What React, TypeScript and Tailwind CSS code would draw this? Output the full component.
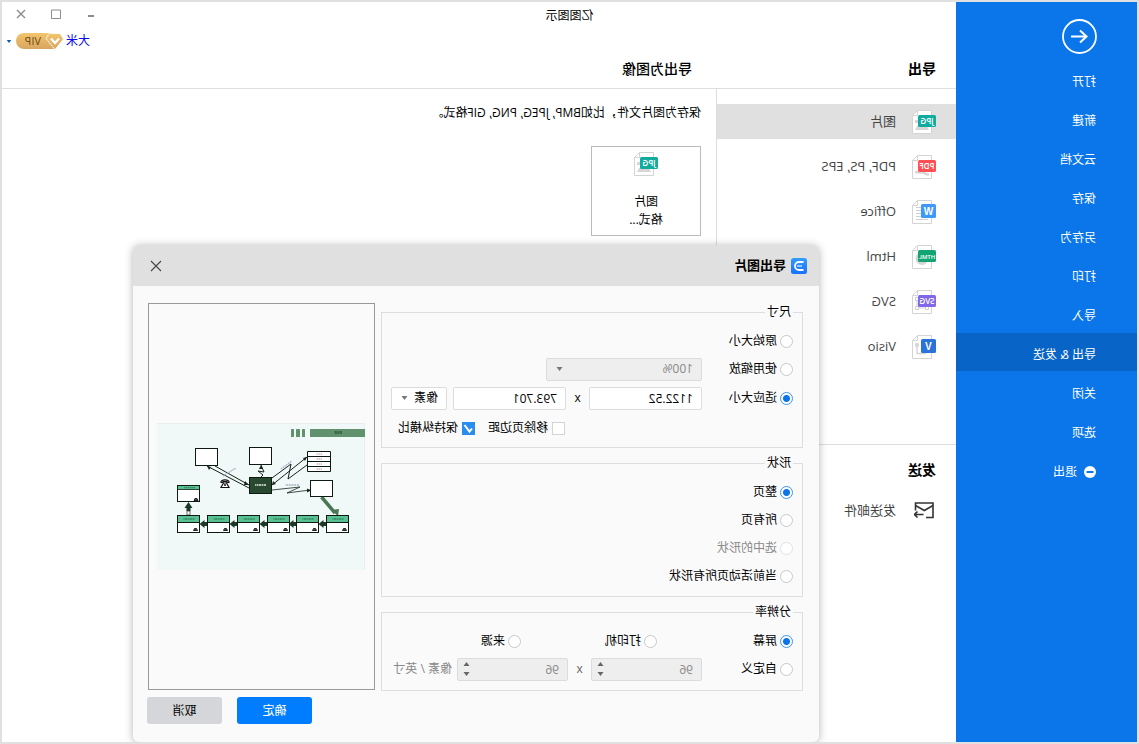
import type { ReactNode } from "react";
import clsx from "clsx";

const menu = ["打开", "新建", "云文档", "保存", "另存为", "打印", "导入", "导出 & 发送", "关闭", "选项"];

type FileType = "JPG" | "PDF" | "W" | "HTML" | "SVG" | "V";

const formats: { type: FileType; label: string }[] = [
  { type: "JPG", label: "图片" },
  { type: "PDF", label: "PDF, PS, EPS" },
  { type: "W", label: "Office" },
  { type: "HTML", label: "Html" },
  { type: "SVG", label: "SVG" },
  { type: "V", label: "Visio" },
];

const badgeColors: Record<FileType, string> = {
  JPG: "#12ab9f",
  PDF: "#ff5055",
  W: "#3f98fb",
  HTML: "#12a572",
  SVG: "#8168e8",
  V: "#2b73d8",
};

function FileArt({ type }: { type: FileType }) {
  switch (type) {
    case "JPG":
      return <path d="M7 20l2-4h10l2 4zM18 10h3v3h-3z" fill="#d6d6d6" />;
    case "PDF":
      return <path d="M7 19.500c3 .500 4-2 7-2s4 .500 7-1" stroke="#d6d6d6" strokeWidth="2.500" fill="none" />;
    case "W":
      return <path d="M8 7.500h12M8 10.500h12M8 13.500h12M8 16.500h12M8 19.500h12" stroke="#d0d0d0" fill="none" />;
    case "HTML":
      return <circle cx="14" cy="13.500" r="6.500" fill="#d6d6d6" />;
    case "SVG":
      return (
        <path d="M7.500 16.500h3v3h-3zM17.500 16.500h3v3h-3zM17.500 7.500h3v3h-3zM10.500 18h7M19 10.500v6" stroke="#d0d0d0" fill="none" />
      );
    default:
      return (
        <g>
          <circle cx="19" cy="10" r="2.200" fill="#d6d6d6" />
          <path d="M19 10v8.500h-9" stroke="#d6d6d6" strokeWidth="1.500" fill="none" />
        </g>
      );
  }
}

function FileIcon({ type }: { type: FileType }) {
  const short = type.length === 1;
  return (
    <svg viewBox="0 0 24 24" className="size-6 shrink-0" aria-hidden="true">
      <path d="M4.500.5h14l5 5v18h-19z" fill="#fff" stroke="#d4d4d4" />
      <path d="M18.500.5v5h5" fill="none" stroke="#d4d4d4" />
      <FileArt type={type} />
      <rect x="0" y={short ? 4 : 5} width={short ? 15 : 18} height={short ? 14 : 12} rx="1.500" fill={badgeColors[type]} />
      <text
        x={short ? 7.5 : 9}
        y={short ? 14.5 : 14}
        textAnchor="middle"
        fill="#fff"
        fontSize={short ? 10 : type === "HTML" ? 6 : 8}
        fontWeight={short ? 700 : 600}
        fontFamily={short ? "Liberation Sans, sans-serif" : "Open Sans, sans-serif"}
      >
        {type}
      </text>
    </svg>
  );
}

function Radio({
  name,
  label,
  checked,
  disabled,
  className,
}: {
  name: string;
  label: string;
  checked?: boolean;
  disabled?: boolean;
  className?: string;
}) {
  return (
    <label className={clsx("flex shrink-0 items-center gap-[3px] whitespace-nowrap", disabled && "text-[#888]", className)}>
      <input
        type="radio"
        name={name}
        defaultChecked={checked}
        disabled={disabled}
        className="size-[13px] appearance-none rounded-full border border-[#c8c8c8] bg-white checked:border-[#3f93f0] checked:bg-[radial-gradient(circle,#0a74e8_0_3px,#fff_4px)] disabled:border-[#e2e2e2]"
      />
      {label}
    </label>
  );
}

function Checkbox({ label, checked }: { label: string; checked?: boolean }) {
  return (
    <label className="flex items-center gap-1 whitespace-nowrap">
      <span className="relative flex size-[13px]">
        <input
          type="checkbox"
          defaultChecked={checked}
          className="peer size-[13px] appearance-none border border-[#d4d4d4] bg-white checked:border-[#2b8cf0] checked:bg-[#2b8cf0]"
        />
        <svg viewBox="0 0 13 13" className="pointer-events-none absolute inset-0 hidden peer-checked:block">
          <path d="M3 6.500l2.500 3.200L10.500 3" fill="none" stroke="#fff" strokeWidth="2" />
        </svg>
      </span>
      {label}
    </label>
  );
}

const fieldBox = "h-[23px] w-full appearance-none rounded-[2px] border border-[#dcdcdc] bg-white px-2 disabled:bg-[#eee] disabled:text-[#888] disabled:opacity-100";

function Dropdown({ label, value, disabled, className }: { label: string; value: string; disabled?: boolean; className: string }) {
  return (
    <div className={clsx("relative", className)}>
      <select aria-label={label} disabled={disabled} className={fieldBox}>
        <option>{value}</option>
      </select>
      <svg viewBox="0 0 6 4" className="pointer-events-none absolute top-[9px] right-[10px] h-1 w-[7px]">
        <path d="M0 0h6L3 4z" fill="#777" />
      </svg>
    </div>
  );
}

function Spinner({ label }: { label: string }) {
  return (
    <div className="relative w-[111px]">
      <input aria-label={label} defaultValue="96" disabled className={fieldBox} />
      <div className="absolute inset-y-0 right-[6px] flex flex-col justify-center gap-[6px]">
        <button type="button" aria-label="增加" disabled>
          <svg viewBox="0 0 6 4" className="h-1 w-[7px]">
            <path d="M0 4h6L3 0z" fill="#666" />
          </svg>
        </button>
        <button type="button" aria-label="减少" disabled>
          <svg viewBox="0 0 6 4" className="h-1 w-[7px]">
            <path d="M0 0h6L3 4z" fill="#666" />
          </svg>
        </button>
      </div>
    </div>
  );
}

function Group({ title, className, children }: { title: string; className?: string; children: ReactNode }) {
  return (
    <fieldset className={clsx("border border-[#dedede] px-[9px] pt-[6px]", className)}>
      <legend className="px-[2px] leading-[18px]">{title}</legend>
      {children}
    </fieldset>
  );
}

// bottom row of the diagram
const steps = [16.5, 46.5, 75.5, 105.5, 135.5, 165.5];

function Diagram() {
  return (
    <svg viewBox="0 0 208 147" className="w-[208px]" aria-hidden="true">
      <rect width="208" height="147" fill="#f1f8f8" />
      <path d="M.5 147V.5H208" fill="none" stroke="#e8efee" />
      <g fill="#5f926d">
        <rect y="6" width="55" height="8" />
        <rect x="60" y="6" width="3" height="8" rx=".5" />
        <rect x="65" y="6" width="4" height="8" rx=".5" />
        <rect x="71" y="6" width="3" height="8" rx=".5" />
      </g>
      <path d="M23 9.500h8" stroke="#3c6548" strokeWidth="3" strokeDasharray="2 .6" />

      {/* connectors */}
      <g fill="none" stroke="#15251a">
        <path d="M158 43L116 65M150 43L116 62" />
        <path d="M104 42l-3 7 6-1-5 4 3 3" />
        <path d="M93 55L74 41l3 15-19-14M93 62L58 34" />
        <path d="M93 67l-28-3 13 6-23-3" strokeWidth=".8" />
      </g>
      <path d="M116 62l4-4 1 4zM158 43l-4 1 2 3zM58 34l4 1-2 3zM93 62l-1-4-3 3zM104 42l-2 4h4zM54 67.500l4-2v4z" fill="#15251a" />
      <path d="M43.500 74L30 90" stroke="#4b7654" strokeWidth="3.500" />
      <path d="M26 86l8 1-7 6z" fill="#4b7654" />
      <path d="M142 45l-13-8M84 38l-11-8" transform="translate(0 8)" stroke="#a9b7c8" strokeWidth="1.500" strokeDasharray="1.500 .7" />
      <path d="M66 62h14" stroke="#a3b3c0" strokeWidth="1.500" strokeDasharray="2 .8" />

      <g fill="#fff" stroke="#0c1a10">
        <rect x="147.500" y="25.500" width="22" height="17" />
        <rect x="93.500" y="24.500" width="22" height="17" />
        <rect x="32.500" y="57.500" width="22" height="16" />
        <path d="M34.500 28.500h23v20h-23zM34.500 33.500h23M34.500 38.500h23M34.500 43.500h23" />
        <rect x="93.500" y="54.500" width="22" height="16" fill="#28482f" />
      </g>
      <path d="M99 62h11" stroke="#e0e6e1" strokeWidth="1.500" strokeDasharray="2 .5" />
      <path d="M43 31h6M43 36h6M43 41h6M43 46h6" stroke="#b69ab8" strokeDasharray="1.500 .5" />

      {/* telephone */}
      <path d="M136 59.500c-1-3.500 9-3.500 8 0h-2v-1h-4v1zM138.500 60h3l2.500 4.500h-8z" fill="#fff" stroke="#111" strokeWidth="1.200" />
      <circle cx="140" cy="62" r="1" fill="#111" />

      <rect x="165.500" y="62.500" width="22" height="16" fill="#fff" stroke="#0c1a10" />
      <rect x="166" y="63" width="21" height="3.500" fill="#58c092" />
      <path d="M165.500 66.500h22" stroke="#0c1a10" strokeWidth=".8" />
      <path d="M170 64.700h11" stroke="#2a7d58" strokeDasharray="1.500 .4" />
      <path d="M167 77.500l1-2h2l1 2z" fill="#555" stroke="#222" />
      <path d="M176.500 79l4 6h-2v3h-4v-3h-2z" fill="#1c3a26" />
      <rect x="175" y="88" width="3" height="4" fill="#fff" stroke="#333" strokeWidth=".7" />

      {steps.map((x, i) => (
        <g key={x}>
          <rect x={x} y="92.500" width="22" height="17" fill="#fff" stroke="#0c1a10" />
          <rect x={x + 0.5} y="93" width="21" height="6" fill="#58c092" />
          <path d={`M${x} 99.500h22`} stroke="#0c1a10" />
          <path d={`M${x + 5} 96h11`} stroke="#2f8a62" strokeWidth="1.500" strokeDasharray="2 .5" />
          <path d={`M${x + 2} 107.500l1-2h2l1 2z`} fill="#555" stroke="#222" />
          {i < 5 && <path d={`M${x + 22.5} 99h2.500v-2l5 4-5 4v-2h-2.500z`} fill="#1c3a26" />}
        </g>
      ))}
    </svg>
  );
}

function ExportDialog() {
  return (
    <div
      role="dialog"
      aria-labelledby="export-title"
      className="absolute top-[243px] left-[318px] w-[686px] overflow-hidden rounded-md bg-[#fafafa] text-xs shadow-[0_1px_8px_rgba(0,0,0,0.3)]"
    >
      <div className="flex h-[41px] items-center bg-[#e0e0e0] pr-[17px] pl-3">
        <svg viewBox="0 0 16 16" className="size-4" aria-hidden="true">
          <defs>
            <linearGradient id="logo" x2="0" y2="1">
              <stop offset="0" stopColor="#339dff" />
              <stop offset="1" stopColor="#1870ff" />
            </linearGradient>
          </defs>
          <rect width="16" height="16" rx="2.500" fill="url(#logo)" />
          <path d="M3.500 4H8a4 4 0 0 1 0 8H3.500" fill="none" stroke="#fff" strokeWidth="1.800" />
          <path d="M5 8h5" stroke="#b5d9ff" strokeWidth="1.600" />
        </svg>
        <h2 id="export-title" className="ml-[5px] flex-1 text-[13px] font-bold">
          导出图片
        </h2>
        <button aria-label="关闭">
          <svg viewBox="0 0 12 12" className="size-3">
            <path d="M1 1l10 10M11 1L1 11" stroke="#444" strokeWidth="1.100" />
          </svg>
        </button>
      </div>

      <form className="flex gap-[6px] pt-[17px] pr-[14px] pb-[18px] pl-4">
        <div className="flex flex-1 flex-col gap-[6px] self-start">
          <Group title="尺寸" className="pb-1">
            <div className="flex h-7 items-center">
              <Radio name="size" label="原始大小" />
            </div>
            <div className="flex h-7 items-center">
              <Radio name="size" label="使用缩放" className="w-[91px]" />
              <Dropdown label="缩放" value="100%" disabled className="w-[156px]" />
            </div>
            <div className="flex h-[30px] items-center">
              <Radio name="size" label="适应大小" checked className="w-[91px]" />
              <input aria-label="宽度" defaultValue="1122.52" className={clsx(fieldBox, "flex-1")} />
              <span className="w-[23px] text-center">x</span>
              <input aria-label="高度" defaultValue="793.701" className={clsx(fieldBox, "flex-1")} />
              <Dropdown label="单位" value="像素" className="ml-[6px] w-14 shrink-0" />
            </div>
            <div className="flex h-[30px] items-center gap-[13px] pl-[228px]">
              <Checkbox label="移除页边距" />
              <Checkbox label="保持纵横比" checked />
            </div>
          </Group>

          <Group title="形状" className="pb-[6px]">
            <div className="flex h-7 items-center">
              <Radio name="shape" label="整页" checked />
            </div>
            <div className="flex h-7 items-center">
              <Radio name="shape" label="所有页" />
            </div>
            <div className="flex h-7 items-center">
              <Radio name="shape" label="选中的形状" disabled />
            </div>
            <div className="flex h-7 items-center">
              <Radio name="shape" label="当前活动页所有形状" />
            </div>
          </Group>

          <Group title="分辨率" className="pb-[7px]">
            <div className="flex h-7 items-center">
              <Radio name="dpi" label="屏幕" checked className="w-[136px]" />
              <Radio name="dpi" label="打印机" className="w-[136px]" />
              <Radio name="dpi" label="来源" />
            </div>
            <div className="flex h-7 items-center">
              <Radio name="dpi" label="自定义" className="w-[91px]" />
              <Spinner label="水平分辨率" />
              <span className="w-[23px] text-center text-[#666]">x</span>
              <Spinner label="垂直分辨率" />
              <span className="ml-[5px] whitespace-nowrap text-[#888]">像素 / 英寸</span>
            </div>
          </Group>
        </div>

        <div className="flex w-[228px] flex-col">
          <div className="mr-px flex min-h-[387px] items-center justify-center border border-[#999]">
            <Diagram />
          </div>
          <div className="mt-[7px] flex justify-end gap-[15px]">
            <button type="button" className="h-[27px] w-[75px] rounded-[3px] bg-[#007dff] text-white">
              确定
            </button>
            <button type="button" className="h-[27px] w-[75px] rounded-[3px] bg-[#d5d6da]">
              取消
            </button>
          </div>
        </div>
      </form>
    </div>
  );
}

export default function App() {
  return (
    <div className="relative flex min-h-screen -scale-x-100 overflow-hidden border-2 border-[#e0e0e0] bg-white font-['Open_Sans','Noto_Sans_CJK_SC',sans-serif] text-xs text-black [font-kerning:none]">
      <nav className="w-[181px] shrink-0 bg-[#0a76ea] pt-[17px] text-white">
        <button aria-label="返回" className="ml-10 block">
          <svg viewBox="0 0 35 35" className="size-[35px]">
            <circle cx="17.500" cy="17.500" r="16.500" fill="none" stroke="#fff" strokeWidth="1.800" />
            <path d="M26 17.500H11M17 11.500l-6.500 6 6.500 6" fill="none" stroke="#fff" strokeWidth="2" />
          </svg>
        </button>
        <ul className="mt-[6px] flex flex-col gap-px">
          {menu.map((item) => (
            <li key={item}>
              <a href="#" className={clsx("flex h-[38px] items-center pt-[6px] pl-[41px]", item.includes("&") && "bg-[#0865c7]")}>
                {item}
              </a>
            </li>
          ))}
          <li>
            <a href="#" className="flex h-[38px] items-center gap-[7px] pt-[6px] pl-[41px]">
              <svg viewBox="0 0 12 12" className="size-3" aria-hidden="true">
                <circle cx="6" cy="6" r="6" fill="#fff" />
                <path d="M2.500 6h7" stroke="#0a76ea" strokeWidth="2" />
              </svg>
              退出
            </a>
          </li>
        </ul>
      </nav>

      <div className="flex flex-1 flex-col">
        <header className="h-[87px] border-b border-[#dedede]">
          <div className="flex h-[27px] items-center">
            <h1 className="flex-1 text-center">亿图图示</h1>
            <div className="flex w-[181px] justify-end gap-[25px] pr-[14px] pb-1">
              <button aria-label="最小化">
                <svg viewBox="0 0 10 10" className="size-[10px]">
                  <path d="M2 7h6" stroke="#8c8c8c" strokeWidth="2" />
                </svg>
              </button>
              <button aria-label="最大化">
                <svg viewBox="0 0 10 10" className="size-[10px]">
                  <path d="M.5 1h9v8.500h-9z" fill="none" stroke="#8c8c8c" />
                </svg>
              </button>
              <button aria-label="关闭窗口">
                <svg viewBox="0 0 10 10" className="size-[10px]">
                  <path d="M1 1l8 8M9 1L1 9" stroke="#8c8c8c" strokeWidth="1.400" />
                </svg>
              </button>
            </div>
          </div>
          <div className="flex h-6 items-center justify-end gap-[2px] pr-1">
            <a href="#" className="text-[#0a0af0]">
              大米
            </a>
            <svg viewBox="0 0 48 16" className="h-4 w-12" aria-label="VIP">
              <defs>
                <linearGradient id="gold" x2="0" y2="1">
                  <stop offset="0" stopColor="#f3c56b" />
                  <stop offset="1" stopColor="#d8a561" />
                </linearGradient>
              </defs>
              <path d="M13 0h27a8 8 0 0 1 0 16H9z" fill="url(#gold)" />
              <path d="M4 .500h11l3 5L9.500 16h-1L.500 6z" fill="url(#gold)" stroke="#fff" strokeDasharray="2 .5" />
              <path d="M5 5.500l4 4.500 4-4.500" fill="none" stroke="#fff" strokeWidth="2.200" />
              <text x="23" y="12" fontSize="11" fill="#6b4a12">
                VIP
              </text>
            </svg>
            <svg viewBox="0 0 6 4" className="ml-[2px] h-[3px] w-[6px]" aria-hidden="true">
              <path d="M0 0h6L3 4z" fill="#0a58b0" />
            </svg>
          </div>
          <div className="flex h-8 items-center text-sm">
            <h2 className="w-[244px] pl-5 font-bold">导出</h2>
            <h2 className="pl-5 font-medium">导出为图像</h2>
          </div>
        </header>

        <div className="flex flex-1">
          <aside className="w-[240px] border-r border-[#dedede]">
            <ul className="flex flex-col gap-[10px] pt-[15px] pb-[80px] text-[13px] text-[#444]">
              {formats.map((f, i) => (
                <li key={f.type}>
                  <a href="#" className={clsx("flex h-[35px] items-center gap-4 pl-5", i === 0 && "bg-[#e0e0e0]")}>
                    <FileIcon type={f.type} />
                    {f.label}
                  </a>
                </li>
              ))}
            </ul>
            <div className="border-t border-[#dedede] pt-[15px] pl-5">
              <h2 className="text-sm font-bold">发送</h2>
              <a href="#" className="mt-[22px] flex items-center gap-[18px] pl-[2px] text-[13px] text-[#444]">
                <svg viewBox="0 0 20 17" className="h-[17px] w-5" fill="none" stroke="#333" strokeWidth="1.600" aria-hidden="true">
                  <path d="M8 15.500H1V1h17.500v7.500" />
                  <path d="M1 3.500l8.700 5 8.800-5M10.500 12.500h9M16.500 9.500l3 3-3 3" />
                </svg>
                发送邮件
              </a>
            </div>
          </aside>

          <main className="flex-1 px-[15px] pt-4">
            <p>保存为图片文件，比如BMP, JPEG, PNG, GIF格式。</p>
            <button className="mt-[25px] flex h-[90px] w-[110px] flex-col items-center border border-[#bbb] pt-[5px]">
              <FileIcon type="JPG" />
              <span className="mt-[17px] leading-[18px]">
                图片
                <br />
                格式...
              </span>
            </button>
          </main>
        </div>
      </div>

      <ExportDialog />
    </div>
  );
}
